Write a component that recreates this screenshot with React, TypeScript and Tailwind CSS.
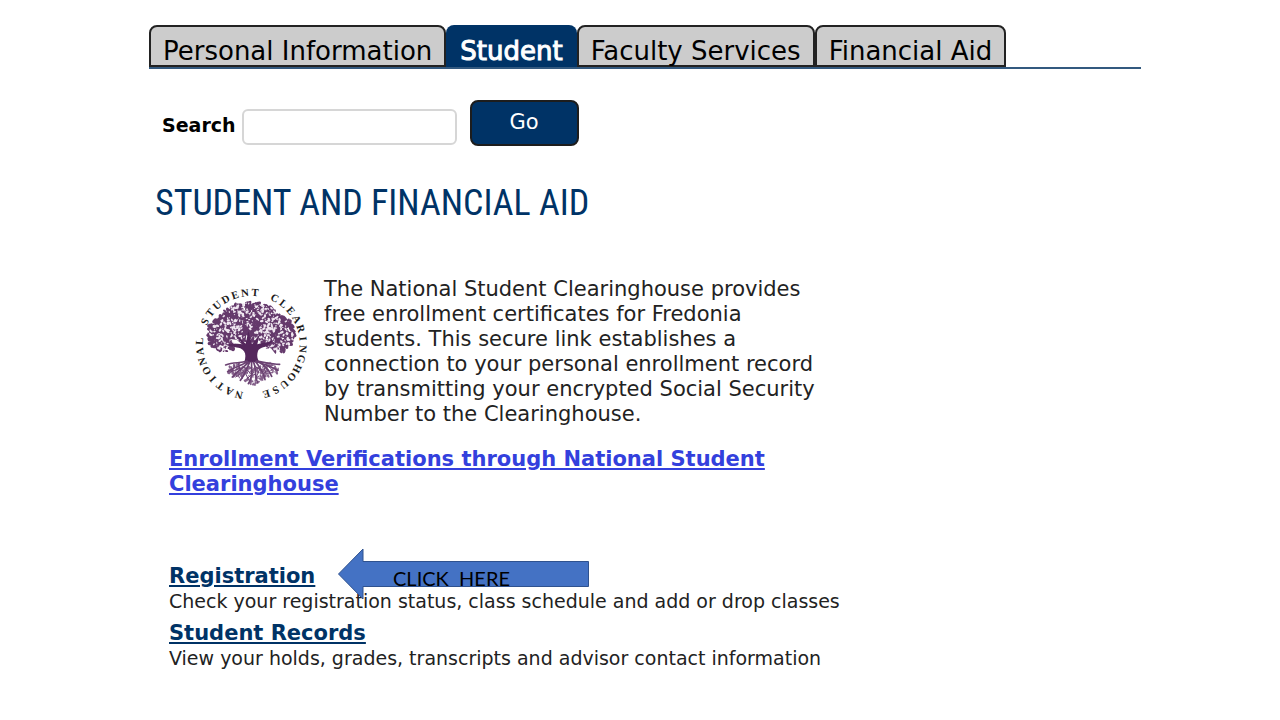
import { useState } from "react";

const TABS = ["Personal Information", "Student", "Faculty Services", "Financial Aid"];

const SEAL_TEXT = "NATIONAL STUDENT CLEARINGHOUSE";

/** Small repeatable generator so the foliage looks the same on every render. */
function seeded(seed: number) {
  let s = seed;
  return () => {
    s = (s * 16807) % 2147483647;
    return s / 2147483647;
  };
}

type Leaf = { x: number; y: number; r: number; turn: number };

function scatter(seed: number, count: number, cx: number, cy: number, rx: number, ry: number, size: number): Leaf[] {
  const rand = seeded(seed);
  return Array.from({ length: count }, () => {
    const a = rand() * Math.PI * 2;
    const d = Math.sqrt(rand());
    return {
      x: cx + Math.cos(a) * d * rx,
      y: cy + Math.sin(a) * d * ry,
      r: size * (0.5 + rand()),
      turn: rand() * 180,
    };
  });
}

const LEAVES = [
  ...scatter(1911, 420, 195, 125, 92, 55, 5),
  ...scatter(2723, 250, 122, 165, 54, 52, 5),
  ...scatter(3937, 270, 274, 165, 54, 56, 5),
  ...scatter(4441, 90, 198, 165, 40, 24, 5),
];
const GAPS = [
  ...scatter(5151, 150, 195, 125, 90, 54, 3),
  ...scatter(6767, 85, 122, 168, 50, 46, 3),
  ...scatter(7979, 85, 274, 165, 50, 50, 3),
];
const SOIL = [
  ...scatter(8123, 70, 158, 274, 30, 22, 3),
  ...scatter(9239, 90, 206, 290, 38, 28, 3),
  ...scatter(9677, 60, 250, 272, 30, 22, 3),
];

function Leaves({ leaves }: { leaves: Leaf[] }) {
  return leaves.map((l, i) => (
    <ellipse key={i} cx={l.x} cy={l.y} rx={l.r * 1.3} ry={l.r * 0.8} transform={`rotate(${l.turn} ${l.x} ${l.y})`} />
  ));
}

function ClearinghouseSeal() {
  return (
    <svg viewBox="0 0 390 390" className="h-[130px] w-[130px] shrink-0" role="img" aria-label="National Student Clearinghouse">
      <g fill="#653a6c">
        <Leaves leaves={LEAVES} />
      </g>
      <g fill="#efe6f0">
        <Leaves leaves={GAPS} />
      </g>
      <path
        d="M136 180l20 3 16 14-22-3zM184 168l10 6-2 16-10-8zM210 178l12-8-2 16-10 8zM232 210l26-2 14 18-12 10-16-14z"
        fill="#ffffff"
      />
      <path
        d="M178 250C184 228 182 216 166 208C150 202 138 206 120 196C142 196 158 192 172 196L156 170L182 194L190 156L201 196L224 166L217 196C232 190 246 192 268 182C248 206 222 204 219 216C215 228 216 240 224 250Z"
        fill="#54275c"
      />
      <g fill="#85618b">
        <Leaves leaves={SOIL} />
      </g>
      <g fill="none" stroke="#6b4272" strokeWidth="5" strokeLinecap="round">
        <path d="M186 246C166 254 146 248 122 258M188 248C166 262 146 264 128 278M190 250C170 272 162 270 142 294M194 250C182 272 182 286 166 304M200 250C198 274 206 290 190 314M206 250C216 272 206 286 218 312M212 248C226 268 236 278 240 302M214 246C240 258 250 270 260 292M216 246C240 250 262 256 284 256M216 248C246 258 258 262 278 274" />
        <path
          d="M150 258l-10 20M164 268l-26 10M176 278l-24 16M182 284l12 24M204 282l-16 16M208 286l20 18M224 270l-10 24M236 262l8 24M248 260l20 18M160 254l8 26M174 262l24 22M212 264l26 16"
          strokeWidth="3"
        />
      </g>
      <g className="font-['Liberation_Serif',serif] text-[32px] font-bold" fill="#1c1c1c" textAnchor="middle">
        {SEAL_TEXT.split("").map((ch, i) => (
          <text key={i} x="199" y="51" transform={`rotate(${194 + i * 11.35} 199 196)`}>
            {ch}
          </text>
        ))}
      </g>
    </svg>
  );
}

function ClickHereArrow() {
  return (
    <div className="absolute -top-4 left-[169px] h-[52px] w-[251px]">
      <svg viewBox="0 0 251 52" className="h-full w-full" aria-hidden>
        <path d="M0.500 26L25 1V13.500H250.500V38.500H25V51Z" fill="#4472c4" stroke="#2f528f" />
      </svg>
      <span className="absolute top-[18px] left-[55px] whitespace-pre font-['Lato',sans-serif] text-[20px] leading-6 text-black">
        {"CLICK  HERE"}
      </span>
    </div>
  );
}

export default function App() {
  const [active, setActive] = useState("Student");
  const [query, setQuery] = useState("");

  return (
    <main className="bg-white pt-[25px] pr-[139px] pb-12 pl-[149px] font-['DejaVu_Sans',sans-serif] text-black">
      <nav className="flex border-b-2 border-[#33597f]" aria-label="Main menu">
        {TABS.map((tab) => (
          <button
            key={tab}
            type="button"
            onClick={() => setActive(tab)}
            className={
              tab === active
                ? "h-[42px] rounded-t-lg bg-[#003366] px-[14px] pt-2.5 text-[26px] leading-8 whitespace-nowrap text-white [-webkit-text-stroke:1px_white]"
                : "h-[42px] rounded-t-lg border-2 border-[#222222] bg-[#cccccc] px-3 pt-2 text-[26px] leading-8 whitespace-nowrap"
            }
          >
            {tab}
          </button>
        ))}
      </nav>

      <form className="mt-[31px] flex items-center pl-[13px]" onSubmit={(e) => e.preventDefault()}>
        <label htmlFor="search" className="mt-1 text-[19px] leading-6 font-bold">
          Search
        </label>
        <input
          id="search"
          value={query}
          onChange={(e) => setQuery(e.target.value)}
          className="mt-2 ml-1.5 h-9 w-[215px] rounded-md border-2 border-[#d6d6d6] px-2 text-lg"
        />
        <button type="submit" className="ml-[13px] h-[46px] w-[109px] rounded-lg border-2 border-[#1d1d1d] bg-[#003366] text-[21px] text-white">
          Go
        </button>
      </form>

      <h1 className="mt-[37px] pl-[6px] font-['Roboto_Condensed',Roboto,sans-serif] text-[36px] leading-10 text-[#003366]">
        STUDENT AND FINANCIAL AID
      </h1>

      <section className="mt-[54px] max-w-[700px] pl-5">
        <div className="flex pl-4">
          <div className="mt-0.5">
            <ClearinghouseSeal />
          </div>
          <p className="ml-[9px] max-w-[500px] text-[21px] leading-[25px] text-[#222222]">
            The National Student Clearinghouse provides free enrollment certificates for Fredonia students. This secure
            link establishes a connection to your personal enrollment record by transmitting your encrypted Social
            Security Number to the Clearinghouse.
          </p>
        </div>
        <p className="mt-5 max-w-[640px] text-[21px] leading-[25px] font-bold">
          <a href="#verifications" className="text-[#3340dd] underline">
            Enrollment Verifications through National Student Clearinghouse
          </a>
        </p>
      </section>

      <ul className="mt-[67px] pl-5">
        <li className="relative">
          <a href="#registration" className="block w-fit text-[21px] leading-[25px] font-bold text-[#003366] underline">
            Registration
          </a>
          <p className="text-[19px] leading-6 text-[#222222]">
            Check your registration status, class schedule and add or drop classes
          </p>
          <ClickHereArrow />
        </li>
        <li className="mt-2">
          <a href="#records" className="block w-fit text-[21px] leading-[25px] font-bold text-[#003366] underline">
            Student Records
          </a>
          <p className="text-[19px] leading-6 text-[#222222]">
            View your holds, grades, transcripts and advisor contact information
          </p>
        </li>
      </ul>
    </main>
  );
}
